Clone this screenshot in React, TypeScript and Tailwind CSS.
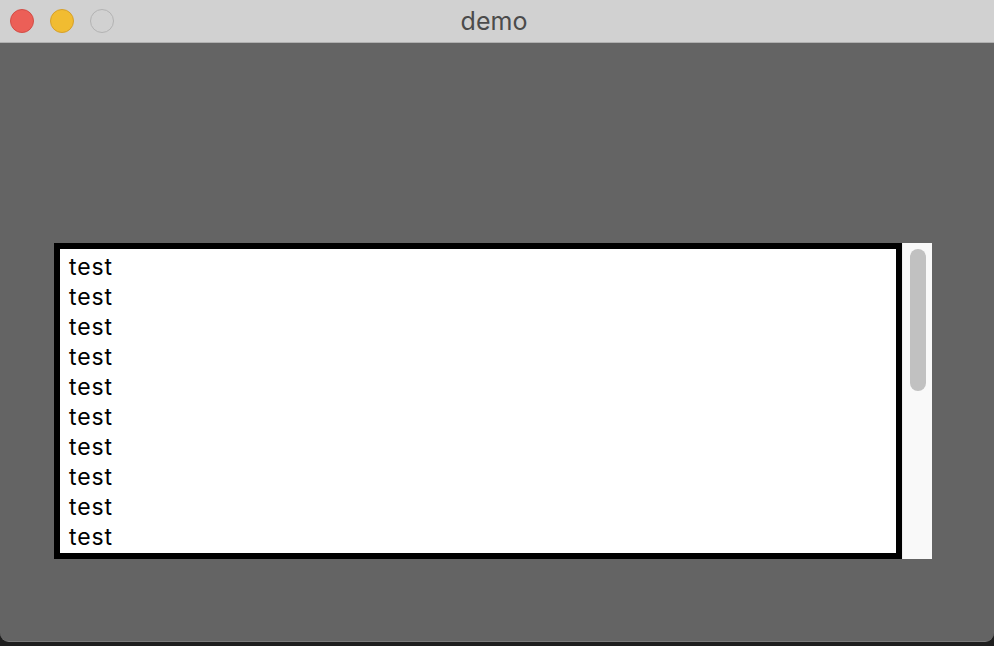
import React from "react";

const lines = Array.from({ length: 10 }, () => "test");

const App: React.FC = () => {
  return (
    <div className="w-[994px] h-[646px] bg-[#1e1e1e] font-['Inter',sans-serif]">
      <div className="w-[994px] h-[642px] flex flex-col bg-[#646464] rounded-b-[9px] overflow-hidden border-b border-[#7a7a7a]">
        <div className="relative h-[43px] shrink-0 flex items-center bg-[#d1d1d1] border-b border-[#b0b0b0]">
          <div className="flex gap-4 pl-[10px] pb-[1px]">
            <span className="w-6 h-6 rounded-full bg-[#ec5f57] border border-[#d24d46]" />
            <span className="w-6 h-6 rounded-full bg-[#f1bc31] border border-[#d6a02a]" />
            <span className="w-6 h-6 rounded-full bg-[#d1d1d1] border border-[#b3b3b3]" />
          </div>
          <div className="absolute inset-0 flex items-center justify-center pt-[2px] pr-[6px] text-[25px] text-[#4b4b4b]">
            demo
          </div>
        </div>
        <div className="flex-1 flex pl-[54px] pt-[200px]">
          <div className="flex h-[316px]">
            <div className="w-[848px] border-[6px] border-black bg-white overflow-hidden pl-[9px] pt-[3px]">
              {lines.map((t, i) => (
                <div key={i} className="h-[30px] leading-[30px] text-[23px] tracking-[0.04em] text-black">
                  {t}
                </div>
              ))}
            </div>
            <div className="w-[30px] bg-[#f9f9f9] border-l border-[#ededed] pl-[7px] pt-[6px]">
              <div className="w-4 h-[142px] rounded-full bg-[#c1c1c1]" />
            </div>
          </div>
        </div>
      </div>
    </div>
  );
};

export default App;
